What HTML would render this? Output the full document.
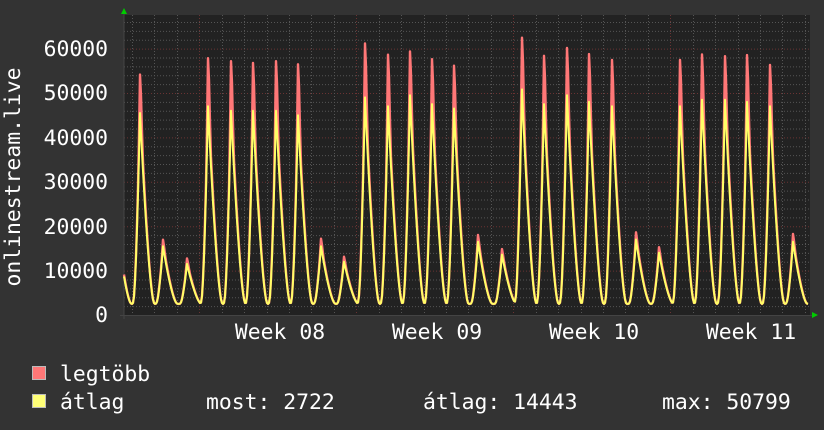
<!DOCTYPE html>
<html><head><meta charset="utf-8"><style>
html,body{margin:0;padding:0;background:#333;}
svg{display:block}
text{font-family:"DejaVu Sans Mono","Liberation Mono",monospace;fill:#fff;font-size:21.4px}
</style></head><body>
<svg id="s" width="824" height="430" viewBox="0 0 824 430" xmlns="http://www.w3.org/2000/svg">
<rect width="824" height="430" fill="#333"/>
<rect x="124" y="15" width="686" height="300" fill="#222"/>
<g id="grid"></g>
<line x1="124" y1="12" x2="124" y2="319" stroke="#444" stroke-width="1"/>
<line x1="120" y1="315.5" x2="812" y2="315.5" stroke="#444" stroke-width="1"/>
<polygon points="121,14 127,14 124,8" fill="#0c0"/>
<polygon points="812,312 812,318 818,315" fill="#0c0"/>
<path id="mx" fill="none" stroke="#ff7777" stroke-width="2.4" stroke-linejoin="round"/>
<path id="av" fill="none" stroke="#ffff66" stroke-width="2" stroke-linejoin="round"/>
<g text-anchor="end">
<text x="108" y="56">60000</text>
<text x="108" y="100">50000</text>
<text x="108" y="145">40000</text>
<text x="108" y="189">30000</text>
<text x="108" y="234">20000</text>
<text x="108" y="278">10000</text>
<text x="108" y="322">0</text>
</g>
<text transform="translate(20,177) rotate(-90)" text-anchor="middle" font-size="19.5">onlinestream.live</text>
<g text-anchor="middle">
<text x="280" y="339">Week 08</text>
<text x="437" y="339">Week 09</text>
<text x="594" y="339">Week 10</text>
<text x="751" y="339">Week 11</text>
</g>
<rect x="32.5" y="366.5" width="13" height="13" fill="#ff7777" stroke="#bbb"/>
<rect x="32.5" y="394.5" width="13" height="13" fill="#ffff77" stroke="#bbb"/>
<text x="60" y="381">legtöbb</text>
<text x="60" y="409">átlag</text>
<text x="206" y="409">most: 2722</text>
<text x="423" y="409">átlag: 14443</text>
<text x="662" y="409">max: 50799</text>
</svg>
<script>
var g=document.getElementById('grid'),h='';
function Y(v){return 315-v*0.00444;}
for(var i=1;i<=33;i++){var y=315-i*8.88;if(y<15)break;var maj=(i%5==0);
 h+='<line x1="124" x2="810" y1="'+(y+.5)+'" y2="'+(y+.5)+'" stroke="'+(maj?'#6a3333':'#555')+'" stroke-dasharray="1,2"/>';}
for(var x=132;x<810;x+=22.43){var xx=Math.round(x);var maj=[199,356,514,671].some(function(m){return Math.abs(m-xx)<3});
 h+='<line y1="15" y2="315" x1="'+(xx+.5)+'" x2="'+(xx+.5)+'" stroke="'+(maj?'#6a3333':'#555')+'" stroke-dasharray="1,2"/>';}
g.innerHTML=h;
var P=[[117,22000,20000],[140,52800,45500],[163,16200,15500],[187,12300,11500],[208,57000,47000],[231,56500,46000],[253,56000,46000],[276,56500,46000],[298,56000,45000],[321,16500,15500],[344,12600,12000],[365,60500,49000],[388,58000,47000],[410,58000,49500],[432,56500,47500],[454,55000,46500],[478,17200,16500],[502,14200,13600],[522,61500,50800],[544,57500,47500],[567,59000,49500],[589,57800,48000],[612,56500,47000],[636,17800,17000],[659,14600,14000],[680,56500,47000],[702,57500,48500],[725,57000,48500],[747,57500,48000],[770,55000,47000],[793,17500,16500]];
function f(t){if(t<-6.5||t>14)return 0;return t<0?Math.pow((t+6.5)/6.5,1.5):Math.pow(1-t/14,1.5);}
var dm='',da='',B=2500,raw=[];
for(var x=118;x<=814;x++){var m=B,a=B;
 P.forEach(function(p){var t=x-p[0],k=f(t);var sp=Math.max(0,1-Math.abs(t-0.5)/2.2);
  a+=(p[2]-B)*k; m+=(p[2]-B)*k*1.07+(p[1]-p[2])*sp;});
 raw.push([x,m,a]);}
for(var i=0;i<raw.length;i++){var x=raw[i][0];if(x<124||x>808)continue;
 var m=raw[i][1],a=raw[i][2];
 // light smoothing for rounded troughs
 var am=(raw[i-1][2]+2*a+raw[i+1][2])/4,mm=(raw[i-1][1]+2*m+raw[i+1][1])/4;
 if(a<8000)a=am; if(m<8000)m=mm;
 dm+=(x==124?'M':'L')+x+','+Y(m).toFixed(1);da+=(x==124?'M':'L')+x+','+Y(a).toFixed(1);}
document.getElementById('mx').setAttribute('d',dm);
document.getElementById('av').setAttribute('d',da);
</script>
</body></html>
